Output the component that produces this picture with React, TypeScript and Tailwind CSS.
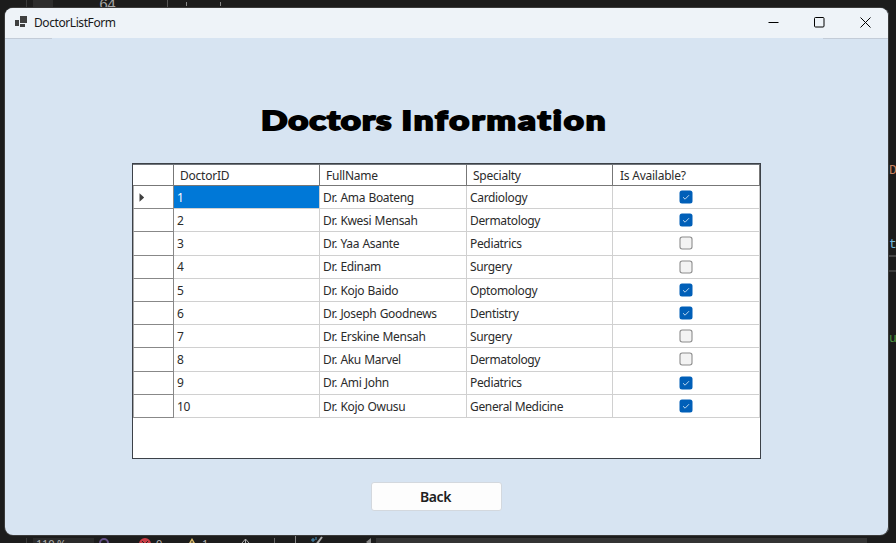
import React from "react";

type Doctor = { id: number; name: string; specialty: string; available: boolean };

const doctors: Doctor[] = [
  { id: 1, name: "Dr. Ama Boateng", specialty: "Cardiology", available: true },
  { id: 2, name: "Dr. Kwesi Mensah", specialty: "Dermatology", available: true },
  { id: 3, name: "Dr. Yaa Asante", specialty: "Pediatrics", available: false },
  { id: 4, name: "Dr. Edinam", specialty: "Surgery", available: false },
  { id: 5, name: "Dr. Kojo Baido", specialty: "Optomology", available: true },
  { id: 6, name: "Dr. Joseph Goodnews", specialty: "Dentistry", available: true },
  { id: 7, name: "Dr. Erskine Mensah", specialty: "Surgery", available: false },
  { id: 8, name: "Dr. Aku Marvel", specialty: "Dermatology", available: false },
  { id: 9, name: "Dr. Ami John", specialty: "Pediatrics", available: true },
  { id: 10, name: "Dr. Kojo Owusu", specialty: "General Medicine", available: true },
];

const columns = "grid grid-cols-[41px_146px_147px_146px_147px]";

function Check({ on }: { on: boolean }) {
  return (
    <svg width="14" height="14" viewBox="0 0 14 14" className="block">
      {on ? (
        <>
          <rect x="0.5" y="0.5" width="13" height="13" rx="2.5" fill="#005fb8" />
          <path d="M4 7.2 6.1 9.2 10 5.2" fill="none" stroke="#b9d5ee" strokeWidth="1" />
        </>
      ) : (
        <rect x="1" y="1" width="12" height="12" rx="2.2" fill="#f3f3f3" stroke="#8c8c8c" strokeWidth="1.1" />
      )}
    </svg>
  );
}

function TitleBar() {
  return (
    <div className="flex h-[30px] shrink-0 items-center bg-[#eef3f8]">
      <svg width="13" height="12" viewBox="0 0 13 12" className="-mt-[2px] ml-[10px]">
        <path d="M0 4h4v6H0zM5 0h7v7H5zM5 8h5v3H5z" fill="#404040" />
      </svg>
      <span className="ml-[6px] text-[12px] leading-[16px] tracking-[-0.42px] text-[#191919]">DoctorListForm</span>
      <div className="-mt-[2px] ml-auto mr-[17px] flex items-center gap-[35px] text-black">
        <svg width="11" height="11" viewBox="0 0 11 11"><path d="M0.5 5.5h10" stroke="currentColor" /></svg>
        <svg width="11" height="11" viewBox="0 0 11 11"><rect x="0.5" y="0.5" width="9.5" height="9.5" rx="1" fill="none" stroke="currentColor" /></svg>
        <svg width="11" height="11" viewBox="0 0 11 11"><path d="M0.5 0.5 10.5 10.5M10.5 0.5 0.5 10.5" stroke="currentColor" /></svg>
      </div>
    </div>
  );
}

function DoctorTable() {
  return (
    <div className="ml-[127px] mt-[24px] h-[296px] w-[629px] border border-[#3c4148] bg-white text-[12px] leading-[16px] tracking-[-0.24px] text-[#2b2b2b] shadow-[inset_0_1px_0_#70757b]">
      <div className={`${columns} h-[22px] border-b border-[#777] pt-px`}>
        <div className="border-r border-[#777]" />
        <div className="flex items-center border-r border-[#777] pl-[6px] pt-px">DoctorID</div>
        <div className="flex items-center border-r border-[#777] pl-[6px] pt-px">FullName</div>
        <div className="flex items-center border-r border-[#777] pl-[6px] pt-px">Specialty</div>
        <div className="flex items-center border-r border-[#777] pl-[7px] pt-px">Is Available?</div>
      </div>
      {doctors.map((d, i) => (
        <div key={d.id} className={`${columns} h-[23.2px]`}>
          <div className="flex items-center border-b border-l border-r border-b-[#888] border-l-[#aaa] border-r-[#888] pl-[5px] pt-px">
            {i === 0 && (
              <svg width="6" height="9" viewBox="0 0 6 9"><path d="M0.5 0.3 5.2 4.5 0.5 8.7z" fill="#404040" /></svg>
            )}
          </div>
          <div className={i === 0 ? "flex items-center border-b border-r border-[#d0d0d0] bg-[#0078d7] bg-clip-padding pl-[3px] pt-[1.5px] text-white" : "flex items-center border-b border-r border-[#d0d0d0] pl-[3px] pt-[1.5px]"}>
            {d.id}
          </div>
          <div className="flex items-center whitespace-nowrap border-b border-r border-[#d0d0d0] pl-[3px] pt-[1.5px] tracking-[-0.33px] [word-spacing:0.6px]">{d.name}</div>
          <div className="flex items-center whitespace-nowrap border-b border-r border-[#d0d0d0] pl-[3px] pt-[1.5px] tracking-[-0.34px]">{d.specialty}</div>
          <div className="flex items-center justify-center border-b border-r border-[#d0d0d0]"><Check on={d.available} /></div>
        </div>
      ))}
    </div>
  );
}

/* Slices of the code editor that stay visible around the form window. */
function EditorTop() {
  return (
    <div className="flex h-2">
      <div className="ml-[26px] w-px bg-[#3a3a3a]" />
      <div className="ml-[6px] w-[20px] bg-[#2d2d2d]" />
      <div className="ml-[46px] h-2 w-[69px] font-['Liberation_Mono',monospace] text-[15px] leading-[12px] tracking-[-1px] text-[#a5a5a5]">64</div>
      <div className="-ml-px h-2 w-px bg-[#555]" />
      <div className="ml-[18px] mt-[2px] h-[4px] w-px bg-[#888]" />
      <div className="ml-[33px] mt-[2px] h-[4px] w-px bg-[#888]" />
    </div>
  );
}

function EditorBottom() {
  return (
    <div className="mt-auto flex h-[7px] pt-[2px] text-[11px] leading-[12px] text-[#b0b0b0]">
      <div className="ml-[26px] w-px bg-[#3a3a3a]" />
      <div className="ml-[6px] w-[61px] whitespace-nowrap bg-[#2a2a2a] pl-[3px] tracking-[-0.2px]">110 %</div>
      <svg className="ml-[5px] shrink-0" width="10" height="10" viewBox="0 0 10 10"><circle cx="5" cy="5" r="4" fill="none" stroke="#65528a" strokeWidth="2" /></svg>
      <svg className="ml-[30px] shrink-0" width="12" height="12" viewBox="0 0 12 12"><circle cx="6" cy="6" r="6" fill="#c93c45" /><path d="m3 3 6 6m0-6L3 9" stroke="#252525" /></svg>
      <span className="ml-[5px] w-[6px]">0</span>
      <svg className="ml-[24px] shrink-0" width="12" height="10" viewBox="0 0 12 10"><path d="M6 0 12 10H0z" fill="#d8b969" /><path d="M6 3v4" stroke="#222" /></svg>
      <span className="ml-[4px] w-[7px]">1</span>
      <svg className="ml-[32px] shrink-0" width="9" height="9" viewBox="0 0 9 9"><path d="M1 5 4.5 1 8 5M4.5 1v8" fill="none" stroke="#aaa" /></svg>
      <div className="ml-[24px] h-5 w-px bg-[#666]" />
      <div className="-mt-[2px] ml-[20px] h-5 w-px bg-[#888]" />
      <svg className="-mt-[2px] ml-[14px] shrink-0" width="14" height="10" viewBox="0 0 14 10"><path d="M3 2v4M1 4h4M6 1v3" stroke="#4a91bd" /><path d="m6 9 6-8" stroke="#aaa" strokeWidth="2" /></svg>
      <svg className="ml-[42px] shrink-0" width="5" height="8" viewBox="0 0 5 8"><path d="M5 0v8L0 4z" fill="#888" /></svg>
      <div className="ml-[5px] h-5 w-[491px] bg-[#343434]" />
    </div>
  );
}

export default function App() {
  return (
    <div className="relative flex h-[543px] w-[896px] flex-col overflow-hidden bg-[#1c1c1c] font-['Noto_Sans','Open_Sans',sans-serif]">
      <EditorTop />
      <div className="ml-auto flex w-[7px] flex-col font-['Liberation_Mono',monospace] text-[13px] leading-[16px]">
        <span className="mt-[155px] text-[#c88461]">D</span>
        <span className="mt-[58px] text-[#76b8dc]">t</span>
        <div className="mt-[2px] h-[2px] bg-[#444]" />
        <div className="mt-[13px] h-[2px] bg-[#3c3c3c]" />
        <span className="mt-[59px] text-[#4d9440]">u</span>
      </div>
      <EditorBottom />
      <main className="absolute left-[5px] top-2 flex h-[527px] w-[883px] flex-col overflow-hidden rounded-[8px] bg-[#d7e4f2] shadow-[0_0_0_1px_#3a3a3a,1px_0_0_0_#9aa6b0]">
        <TitleBar />
        <div className="flex h-px shrink-0 justify-between">
          <div className="w-[47px] bg-[#c3ccd8]" />
          <div className="w-[65px] bg-[#c3ccd8]" />
        </div>
        <h1 className="ml-[256px] mt-[62px] h-[38px] w-max origin-left scale-x-[1.29] whitespace-nowrap font-['Lato',sans-serif] text-[27px] font-black leading-[38px] tracking-[1.55px] text-black [-webkit-text-stroke:1.8px_black]">
          <span className="tracking-[0.7px]">Doctors </span>
          Information
        </h1>
        <DoctorTable />
        <button className="ml-[366px] mt-[23px] flex h-[29px] w-[131px] items-center justify-center rounded-[3px] border border-[#d3d8de] bg-[#fdfdfd] pr-[2px] text-[14px] font-semibold leading-[18px] tracking-[-0.45px] text-[#202020]">
          Back
        </button>
      </main>
    </div>
  );
}
